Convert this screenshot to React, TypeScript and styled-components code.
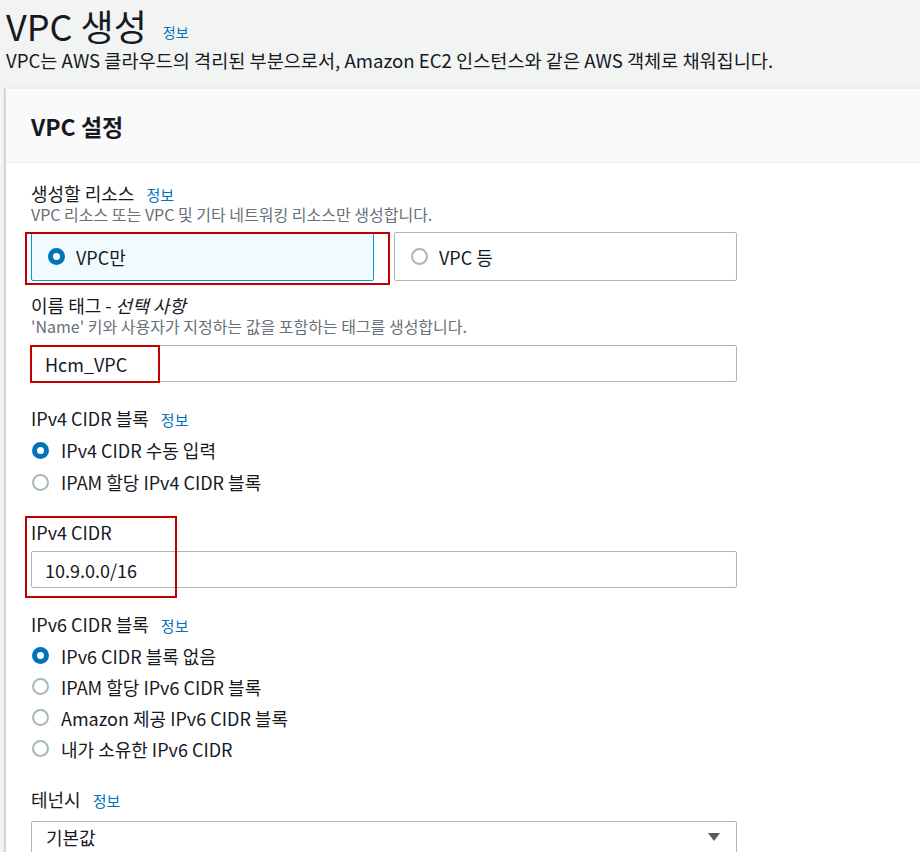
import React from "react";
import styled, { createGlobalStyle } from "styled-components";

const GlobalStyle = createGlobalStyle`
  html, body {
    margin: 0;
    padding: 0;
    background: #f2f3f3;
    overflow: hidden;
  }
  body {
    font-family: "Noto Sans CJK KR", "Noto Sans", sans-serif;
    color: #16191f;
  }
`;

const App = () => {
  return (
    <>
      <GlobalStyle />
      <Page>
        <Header>
          <TitleRow>
            <Title>VPC 생성</Title>
            <TitleInfo>정보</TitleInfo>
          </TitleRow>
          <Subtitle>
            VPC는 AWS 클라우드의 격리된 부분으로서, Amazon EC2 인스턴스와 같은 AWS 객체로 채워집니다.
          </Subtitle>
        </Header>

        <Card>
          <CardHeader>
            <CardTitle>VPC 설정</CardTitle>
          </CardHeader>
          <CardBody>
            <Field $top={19}>
              <Label>
                생성할 리소스 <Info>정보</Info>
              </Label>
              <Desc>VPC 리소스 또는 VPC 및 기타 네트워킹 리소스만 생성합니다.</Desc>
              <Tiles>
                <Marked>
                  <Tile $selected>
                    <Radio $checked />
                    VPC만
                  </Tile>
                  <RedBox $l={-6} $t={0} $r={-16} $b={-4} />
                </Marked>
                <Tile>
                  <Radio />
                  VPC 등
                </Tile>
              </Tiles>
            </Field>

            <Field $top={13}>
              <Label>
                이름 태그 - <Italic>선택 사항</Italic>
              </Label>
              <Desc>'Name' 키와 사용자가 지정하는 값을 포함하는 태그를 생성합니다.</Desc>
              <Marked $gap={9}>
                <Input>Hcm_VPC</Input>
                <RedBox $l={-1} $t={0} $w={130} $b={-1} />
              </Marked>
            </Field>

            <Field $top={25}>
              <Label>
                IPv4 CIDR 블록 <Info>정보</Info>
              </Label>
              <Options $gap={5} $row={32}>
                <Option>
                  <Radio $checked />
                  IPv4 CIDR 수동 입력
                </Option>
                <Option>
                  <Radio />
                  IPAM 할당 IPv4 CIDR 블록
                </Option>
              </Options>
            </Field>

            <Field $top={23}>
              <Marked>
                <Label>IPv4 CIDR</Label>
                <InputGap>
                  <Input>10.9.0.0/16</Input>
                </InputGap>
                <RedBox $l={-6} $t={-5} $w={152} $b={-10} />
              </Marked>
            </Field>

            <Field $top={25}>
              <Label>
                IPv6 CIDR 블록 <Info>정보</Info>
              </Label>
              <Options $gap={5} $row={31}>
                <Option>
                  <Radio $checked />
                  IPv6 CIDR 블록 없음
                </Option>
                <Option>
                  <Radio />
                  IPAM 할당 IPv6 CIDR 블록
                </Option>
                <Option>
                  <Radio />
                  Amazon 제공 IPv6 CIDR 블록
                </Option>
                <Option>
                  <Radio />
                  내가 소유한 IPv6 CIDR
                </Option>
              </Options>
            </Field>

            <Field $top={24}>
              <Label>
                테넌시 <Info>정보</Info>
              </Label>
              <Select>
                기본값
                <svg width="14" height="10" viewBox="0 0 14 10">
                  <path d="M1 1 L13 1 L7 9 Z" fill="#545b64" />
                </svg>
              </Select>
            </Field>
          </CardBody>
        </Card>
      </Page>
    </>
  );
};

export default App;

const Page = styled.div`
  width: 100%;
  min-height: 852px;
  display: flex;
  flex-direction: column;
`;

const Header = styled.div`
  padding: 4px 6px 0;
`;

const TitleRow = styled.div`
  display: flex;
  align-items: baseline;
`;

const Title = styled.h1`
  margin: 0;
  font-size: 36px;
  line-height: 42px;
  font-weight: 400;
  color: #16191f;
`;

const TitleInfo = styled.span`
  margin-left: 16px;
  font-size: 14px;
  line-height: 1;
  color: #0073bb;
  position: relative;
  top: -3px;
`;

const Subtitle = styled.div`
  margin-top: 2px;
  font-size: 18.6px;
  line-height: 24px;
  color: #16191f;
`;

const Card = styled.div`
  margin: 16px -20px 0 5px;
  flex: 1;
  background: #fff;
  border-top: 1px solid #eaeded;
  border-left: 1px solid #d5dbdb;
  box-shadow: -1px 0 1px rgba(0, 28, 36, 0.15);
`;

const CardHeader = styled.div`
  height: 73px;
  display: flex;
  align-items: center;
  padding-left: 25px;
  background: #fafafa;
  border-bottom: 1px solid #eaeded;
`;

const CardTitle = styled.h2`
  margin: 0;
  font-size: 23px;
  line-height: 30px;
  font-weight: 700;
  color: #16191f;
`;

const CardBody = styled.div`
  width: 706px;
  padding: 0 25px;
  display: flex;
  flex-direction: column;
`;

const Field = styled.div<{ $top: number }>`
  margin-top: ${(p) => p.$top}px;
  display: flex;
  flex-direction: column;
`;

const Label = styled.div`
  height: 22px;
  font-size: 18px;
  line-height: 22px;
  color: #16191f;
`;

const Info = styled.span`
  margin-left: 8px;
  font-size: 15px;
  line-height: 1;
  color: #0073bb;
`;

const Italic = styled.i`
  font-style: italic;
  padding-right: 2px;
`;

const Desc = styled.div`
  height: 20px;
  font-size: 16px;
  line-height: 20px;
  color: #687078;
`;

const Tiles = styled.div`
  margin-top: 8px;
  display: grid;
  grid-template-columns: 1fr 1fr;
  gap: 20px;
`;

const Marked = styled.div<{ $gap?: number }>`
  position: relative;
  margin-top: ${(p) => p.$gap || 0}px;
`;

const RedBox = styled.div<{ $l: number; $t: number; $r?: number; $b: number; $w?: number }>`
  position: absolute;
  left: ${(p) => p.$l}px;
  top: ${(p) => p.$t}px;
  bottom: ${(p) => p.$b}px;
  ${(p) => (p.$w ? `width: ${p.$w}px;` : `right: ${p.$r}px;`)}
  border: 2px solid #c00000;
  box-sizing: border-box;
  pointer-events: none;
`;

const Tile = styled.div<{ $selected?: boolean }>`
  height: 49px;
  box-sizing: border-box;
  display: flex;
  align-items: center;
  gap: 11px;
  padding-left: 16px;
  font-size: 18px;
  border: 1px solid ${(p) => (p.$selected ? "#00a1c9" : "#aab7b8")};
  background: ${(p) => (p.$selected ? "#f1faff" : "#fff")};
  border-radius: 2px;
`;

const Radio = styled.span<{ $checked?: boolean }>`
  width: 17px;
  height: 17px;
  flex: none;
  box-sizing: border-box;
  border-radius: 50%;
  background: #fff;
  border: ${(p) => (p.$checked ? "5px solid #0073bb" : "2px solid #aab7b8")};
`;

const Options = styled.div<{ $gap: number; $row: number }>`
  margin-top: ${(p) => p.$gap}px;
  display: grid;
  grid-auto-rows: ${(p) => p.$row}px;
`;

const Option = styled.div`
  display: flex;
  align-items: center;
  gap: 12px;
  padding-left: 1px;
  font-size: 18px;
`;

const InputGap = styled.div`
  margin-top: 8px;
`;

const Input = styled.div`
  height: 37px;
  box-sizing: border-box;
  display: flex;
  align-items: center;
  padding-left: 13px;
  font-size: 18px;
  border: 1px solid #aab7b8;
  border-radius: 2px;
  background: #fff;
`;

const Select = styled(Input)`
  margin-top: 11px;
  justify-content: space-between;
  padding-right: 15px;
  padding-left: 14px;
  padding-bottom: 6px;
`;
